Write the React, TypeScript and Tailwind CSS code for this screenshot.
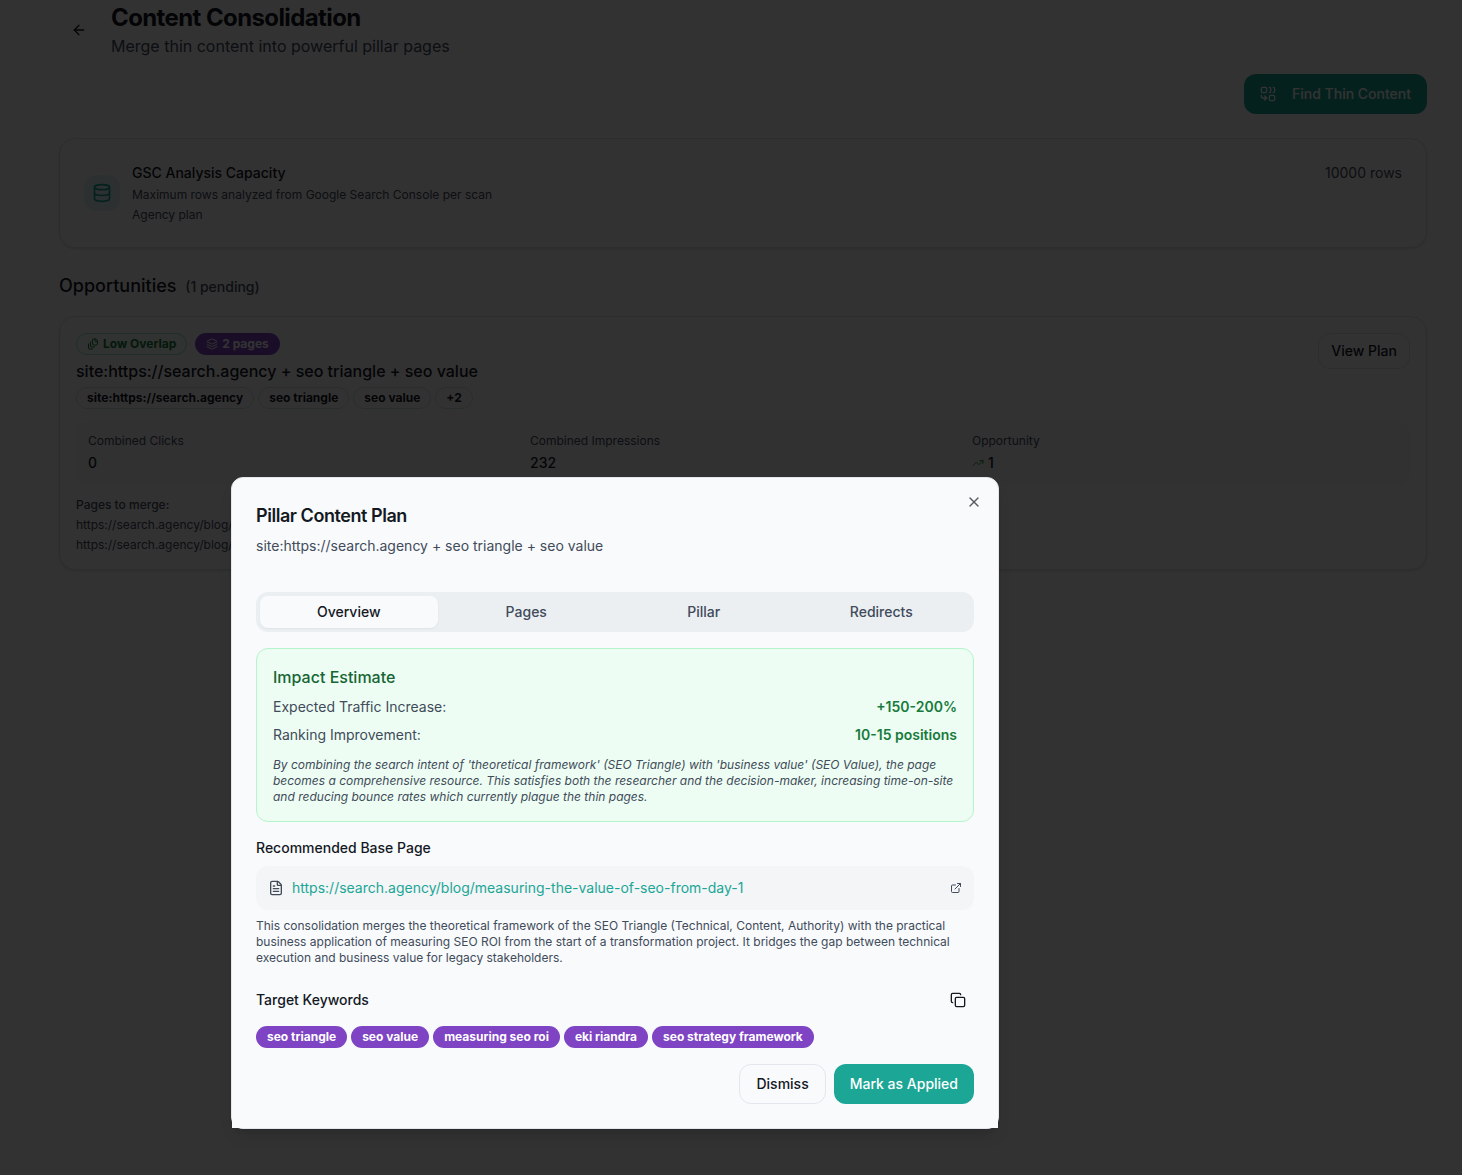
import { useState } from 'react';
import type { ReactNode } from 'react';
import { ArrowLeft, Copy, Database, ExternalLink, FileText, Layers, TrendingUp, X } from 'lucide-react';

const TABS = ['Overview', 'Pages', 'Pillar', 'Redirects'];

const KEYWORDS = ['seo triangle', 'seo value', 'measuring seo roi', 'eki riandra', 'seo strategy framework'];

const CHIPS = ['site:https://search.agency', 'seo triangle', 'seo value', '+2'];

const PAGES = [
  'https://search.agency/blog/measuring-the-value-of-seo-from-day-1',
  'https://search.agency/blog/the-seo-triangle',
];

const BASE_PAGE = 'https://search.agency/blog/measuring-the-value-of-seo-from-day-1';

const CombineIcon = () => (
  <svg viewBox="0 0 24 24" fill="none" stroke="currentColor" strokeWidth={2} strokeLinecap="round" strokeLinejoin="round" className="size-4">
    <rect width="8" height="8" x="2" y="2" rx="2" />
    <path d="M14 2c1.1 0 2 .9 2 2v4c0 1.1-.9 2-2 2" />
    <path d="M20 2c1.1 0 2 .9 2 2v4c0 1.1-.9 2-2 2" />
    <path d="M10 18H5c-1.7 0-3-1.3-3-3v-1" />
    <path d="m7 21 3-3-3-3" />
    <rect width="8" height="8" x="14" y="14" rx="2" />
  </svg>
);

const FileStackIcon = () => (
  <svg viewBox="0 0 24 24" fill="none" stroke="currentColor" strokeWidth={2} strokeLinecap="round" strokeLinejoin="round" className="size-3">
    <path d="M21 7h-3a2 2 0 0 1-2-2V2" />
    <path d="M21 6v6.5c0 .8-.7 1.5-1.5 1.5h-7c-.8 0-1.5-.7-1.5-1.5v-9c0-.8.7-1.5 1.5-1.5H17Z" />
    <path d="M7 8v8.8c0 .3.2.6.4.8.2.2.5.4.8.4H15" />
    <path d="M3 12v8.8c0 .3.2.6.4.8.2.2.5.4.8.4H11" />
  </svg>
);

const Stat = ({ label, children }: { label: string; children: ReactNode }) => (
  <div>
    <p className="text-xs text-[#414b5a]">{label}</p>
    <p className="mt-1 flex items-center gap-1 text-sm font-medium">{children}</p>
  </div>
);

// Purple filled pill, used for counters and keywords
const Pill = ({ children }: { children: ReactNode }) => (
  <span className="inline-flex items-center gap-1 rounded-full border border-transparent bg-[#7e44c3] px-2.5 py-0.5 text-xs font-bold text-white">
    {children}
  </span>
);

function Consolidation() {
  return (
    <main className="pr-[35px] pl-[59px] pt-0.5">
      <header className="flex items-center gap-3">
        <button aria-label="Back" className="flex size-10 items-center justify-center rounded-xl">
          <ArrowLeft className="size-4" />
        </button>
        <div>
          <h1 className="text-2xl font-bold tracking-tight">Content Consolidation</h1>
          <p className="text-base text-[#414b5a]">Merge thin content into powerful pillar pages</p>
        </div>
      </header>

      <div className="mt-4 flex justify-end">
        <button className="flex h-10 items-center gap-4 rounded-xl bg-[#1ba696] px-4 text-sm font-medium text-white">
          <CombineIcon />
          Find Thin Content
        </button>
      </div>

      <section className="mt-6 flex items-center gap-3 rounded-2xl border border-[#d9dee4] p-6 shadow-sm">
        <span className="flex size-9 items-center justify-center rounded-xl bg-[#1ba696]/10 text-[#1ba696]">
          <Database className="size-5" />
        </span>
        <div className="flex-1">
          <p className="text-sm font-medium">GSC Analysis Capacity</p>
          <p className="mt-1 text-xs text-[#414b5a]">Maximum rows analyzed from Google Search Console per scan</p>
          <p className="mt-1 text-xs text-[#414b5a]">Agency plan</p>
        </div>
        <p className="self-start text-sm text-[#414b5a]">10000 rows</p>
      </section>

      <h2 className="mt-6 text-lg font-medium">
        Opportunities <span className="ml-1 text-sm text-[#414b5a]">(1 pending)</span>
      </h2>

      <section className="mt-4 rounded-2xl border border-[#d9dee4] p-4 shadow-sm">
        <div className="flex items-start justify-between">
          <div>
            <div className="flex gap-2">
              <span className="inline-flex items-center gap-1 rounded-full border border-[#a3e6ba] bg-[#edfdf3] px-2.5 py-0.5 text-xs font-bold text-[#187a3c]">
                <FileStackIcon />
                Low Overlap
              </span>
              <Pill>
                <Layers className="size-3" />2 pages
              </Pill>
            </div>
            <h3 className="mt-1 text-base font-medium">site:https://search.agency + seo triangle + seo value</h3>
            <div className="mt-1 flex gap-1">
              {CHIPS.map((chip) => (
                <span
                  key={chip}
                  className="rounded-full border border-[#d3dee0] px-2.5 py-0.5 text-xs font-bold"
                >
                  {chip}
                </span>
              ))}
            </div>
          </div>
          <button className="h-9 rounded-xl border border-[#dce0e5] px-3 text-sm font-medium">View Plan</button>
        </div>

        <div className="mt-3 grid grid-cols-3 gap-4 rounded-xl bg-[#f3f4f6] p-3">
          <Stat label="Combined Clicks">0</Stat>
          <Stat label="Combined Impressions">232</Stat>
          <Stat label="Opportunity">
            <TrendingUp className="size-3 text-[#16a34a]" />1
          </Stat>
        </div>

        <div className="mt-3 space-y-1 text-xs text-[#414b5a]">
          <p className="font-medium">Pages to merge:</p>
          {PAGES.map((page) => (
            <p key={page}>{page}</p>
          ))}
        </div>
      </section>
    </main>
  );
}

function PlanDialog() {
  const [tab, setTab] = useState('Overview');

  return (
    <div
      role="dialog"
      aria-labelledby="plan-title"
      className="absolute top-[477px] left-[231px] w-full max-w-3xl rounded-xl border border-[#e3e6ec] bg-[#f8fafc] px-6 pt-6 shadow-lg"
    >
      <button aria-label="Close" className="absolute top-4 right-4 opacity-70">
        <X className="size-4" />
      </button>

      <h2 id="plan-title" className="text-lg font-semibold tracking-tight">
        Pillar Content Plan
      </h2>
      <p className="mt-1.5 text-sm text-[#414b5a]">site:https://search.agency + seo triangle + seo value</p>

      <div role="tablist" className="mt-9 grid h-10 grid-cols-4 rounded-xl bg-[#ebeff2] p-1">
        {TABS.map((name) => (
          <button
            key={name}
            role="tab"
            aria-selected={tab === name}
            onClick={() => setTab(name)}
            className={`rounded-lg text-sm font-medium ${
              tab === name ? 'bg-[#f8fafc] shadow-xs' : 'text-[#414b5a]'
            }`}
          >
            {name}
          </button>
        ))}
      </div>

      <section className="mt-4 rounded-xl border border-[#b4f5cb] bg-[#edfdf3] p-4">
        <h3 className="text-base font-medium text-[#166534]">Impact Estimate</h3>
        <dl className="mt-2 space-y-2 text-sm">
          <div className="flex justify-between">
            <dt className="text-[#414b5a]">Expected Traffic Increase:</dt>
            <dd className="font-semibold text-[#187a3c]">+150-200%</dd>
          </div>
          <div className="flex justify-between">
            <dt className="text-[#414b5a]">Ranking Improvement:</dt>
            <dd className="font-semibold text-[#187a3c]">10-15 positions</dd>
          </div>
        </dl>
        <p className="mt-3 text-xs text-[#414b5a] italic">
          By combining the search intent of 'theoretical framework' (SEO Triangle) with 'business value' (SEO Value),
          the page becomes a comprehensive resource. This satisfies both the researcher and the decision-maker,
          increasing time-on-site and reducing bounce rates which currently plague the thin pages.
        </p>
      </section>

      <h3 className="mt-4 text-sm font-medium">Recommended Base Page</h3>
      <div className="mt-2 flex items-center gap-2 rounded-xl bg-[#f3f5f7] p-3 text-[#414b5a]">
        <FileText className="size-4" />
        <a href={BASE_PAGE} className="flex-1 text-sm text-[#1ba696]">
          {BASE_PAGE}
        </a>
        <ExternalLink className="size-3" />
      </div>
      <p className="mt-2 text-xs text-[#414b5a]">
        This consolidation merges the theoretical framework of the SEO Triangle (Technical, Content, Authority) with
        the practical business application of measuring SEO ROI from the start of a transformation project. It bridges
        the gap between technical execution and business value for legacy stakeholders.
      </p>

      <div className="mt-4 flex items-center justify-between">
        <h3 className="text-sm font-medium">Target Keywords</h3>
        <button aria-label="Copy keywords" className="h-9 px-2">
          <Copy className="size-4" />
        </button>
      </div>
      <div className="mt-2 flex flex-wrap gap-1">
        {KEYWORDS.map((keyword) => (
          <Pill key={keyword}>{keyword}</Pill>
        ))}
      </div>

      {/* footer keeps square corners over the rounded panel */}
      <footer className="-mx-6 flex justify-end gap-2 bg-[#f8fafc] px-6 pt-4 pb-6 text-sm font-medium">
        <button className="h-10 rounded-xl border border-[#e3e6ec] px-4">Dismiss</button>
        <button className="h-10 rounded-xl bg-[#1ba696] px-4 text-white">Mark as Applied</button>
      </footer>
    </div>
  );
}

export default function App() {
  return (
    <div className="relative min-h-screen bg-[#f8fafc] font-['Inter',sans-serif] text-[#14181f]">
      <Consolidation />
      <div className="absolute inset-0 bg-black/80" />
      <PlanDialog />
    </div>
  );
}
